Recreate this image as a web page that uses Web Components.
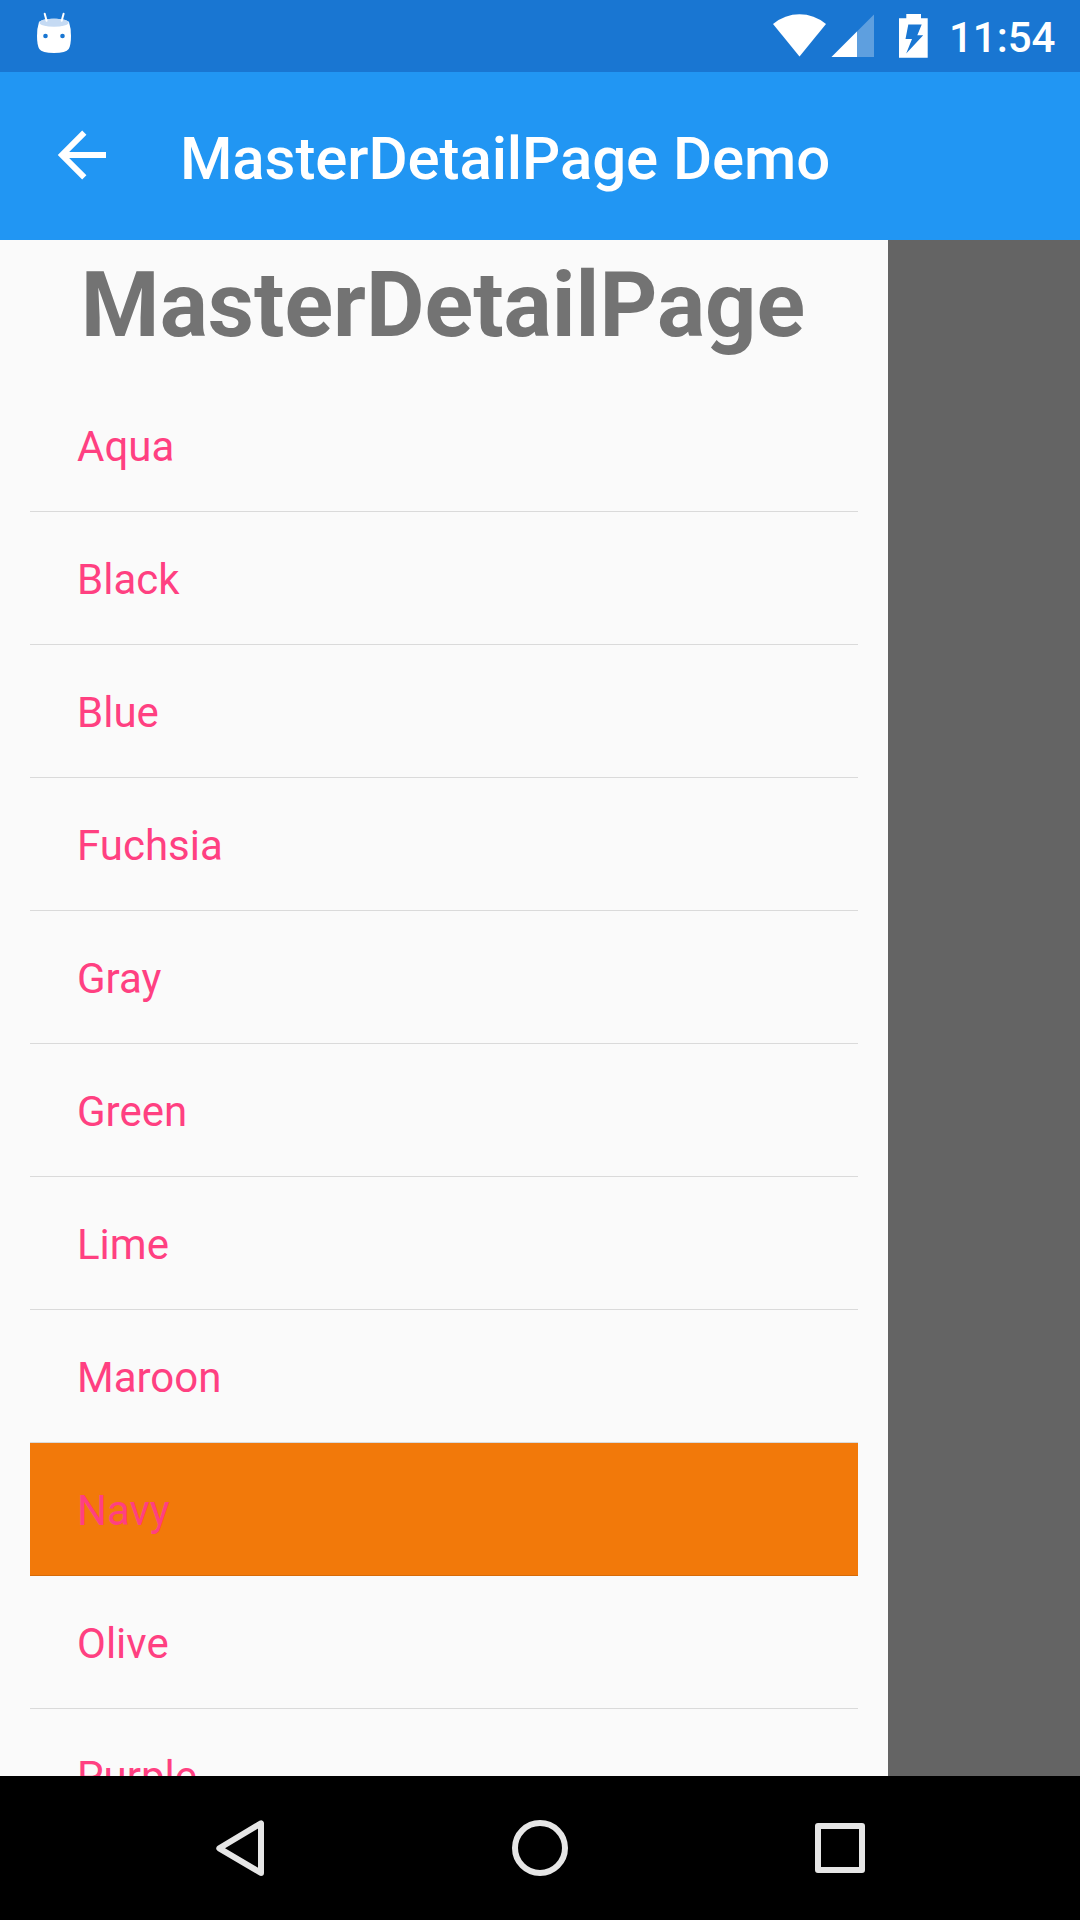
<!DOCTYPE html>
<html lang="en">
<head>
<meta charset="utf-8">
<title>MasterDetailPage Demo</title>
<style>
html,body{margin:0;padding:0}
body{width:1080px;height:1920px;overflow:hidden;font-family:Roboto,sans-serif}
</style>
</head>
<body>
<phone-screen>
  <status-bar slot="status">11:54</status-bar>
  <tool-bar slot="toolbar">MasterDetailPage Demo</tool-bar>
  <master-drawer>
    <span slot="heading">MasterDetailPage</span>
    <color-item>Aqua</color-item>
    <color-item>Black</color-item>
    <color-item>Blue</color-item>
    <color-item>Fuchsia</color-item>
    <color-item>Gray</color-item>
    <color-item>Green</color-item>
    <color-item>Lime</color-item>
    <color-item>Maroon</color-item>
    <color-item selected>Navy</color-item>
    <color-item>Olive</color-item>
    <color-item>Purple</color-item>
  </master-drawer>
  <nav-bar slot="nav"></nav-bar>
</phone-screen>
<script>
function define(name, html) {
  customElements.define(name, class extends HTMLElement {
    constructor() {
      super();
      this.attachShadow({ mode: 'open' }).innerHTML = html;
    }
  });
}

define('phone-screen', `
<style>
:host{display:flex;flex-direction:column;width:1080px;height:1920px;overflow:hidden}
main{flex:1;min-height:0;display:flex;background:#646464;overflow:hidden}
</style>
<slot name="status"></slot><slot name="toolbar"></slot>
<main><slot></slot></main>
<slot name="nav"></slot>`);

define('status-bar', `
<style>
:host{display:flex;height:72px;box-sizing:border-box;background:#1976d2;color:#fff;padding:0 0 0 30px;justify-content:space-between;font-size:42px;font-weight:500}
.right{display:flex;width:315px}
svg{display:block;flex:none}
.time{line-height:72px;padding-top:2px;height:70px;white-space:nowrap;letter-spacing:-.05px}
</style>
<svg width="50" height="72" viewBox="30 0 50 72">
  <path d="M39 22C43 17.5 65 17.5 69 22Q71 28 71 36Q71 45 68.700 49Q66 52.900 54 52.900Q42 52.900 39.300 49Q37 45 37 36Q37 28 39 22Z" fill="#fff"/>
  <ellipse cx="54" cy="22.700" rx="14.600" ry="4" fill="#c5daf3"/>
  <path d="M44.700 13.700L46.600 20.800M63.600 13.700L61.700 20.800" stroke="#fff" stroke-width="2" stroke-linecap="round"/>
  <circle cx="45.500" cy="36" r="2.300" fill="#1976d2"/><circle cx="62.500" cy="36" r="2.300" fill="#1976d2"/>
</svg>
<div class="right">
  <svg width="184" height="72" viewBox="765 0 184 72">
    <path d="M799.500 56.500L773 24Q785 14.300 799.500 14.300T826 24Z" fill="#fff"/>
    <path d="M874 14.500V57H831.500Z" fill="#fff" fill-opacity=".3"/>
    <path d="M857 31.500V57H831.500Z" fill="#fff"/>
    <path fill-rule="evenodd" fill="#fff" d="M906.300 14H921V18.300H927.700V57.700H899V18.300H906.300ZM908.300 24.500L905.500 39H912L906.200 53.500L923.200 35.300H917.300L921.700 24.500Z"/>
  </svg>
  <div class="time"><slot></slot></div>
</div>`);

define('tool-bar', `
<style>
:host{display:flex;height:168px;background:#2196f3;color:#fff;font-size:60px;font-weight:500}
svg{flex:none;display:block}
.title{line-height:168px;padding-top:3px;height:165px;white-space:nowrap;letter-spacing:-.1px}
</style>
<svg width="180" height="168" viewBox="0 72 180 168"><path d="M106 155H64M84.300 132.700L62 155L84.300 177.300" fill="none" stroke="#fff" stroke-width="6"/></svg>
<div class="title"><slot></slot></div>`);

define('master-drawer', `
<style>
:host{display:flex;flex-direction:column;width:888px;height:100%;background:#fafafa;overflow:hidden}
h1{margin:0;flex:none;height:139px;line-height:132px;text-align:center;font-size:90px;font-weight:700;color:#737373;white-space:nowrap;padding-right:2px}
.list{display:flex;flex-direction:column;padding:0 30px}
</style>
<h1><slot name="heading"></slot></h1>
<div class="list"><slot></slot></div>`);

define('color-item', `
<style>
:host{display:block;box-sizing:border-box;flex:none;height:133px;padding:2px 0 0 47px;border-bottom:1px solid #dadada;font-size:42px;line-height:132px;color:#ff4081;white-space:nowrap}
:host([selected]){background:#f2790a;border-bottom-color:#d56b0a}
div{height:130px}
</style>
<div><slot></slot></div>`);

define('nav-bar', `
<style>
:host{display:flex;height:144px;flex:none;box-sizing:border-box;padding:0 90px;background:#000}
div{flex:1;display:flex;align-items:center;justify-content:center}
svg{display:block;fill:none;stroke:#e6e6e6;stroke-width:6}
</style>
<div><svg width="72" height="72" viewBox="204 1812 72 72"><path d="M219.300 1848.300L261 1823.300V1873Z" stroke-linejoin="round"/></svg></div>
<div><svg width="72" height="72"><circle cx="36" cy="36" r="25"/></svg></div>
<div><svg width="72" height="72"><path d="M14 14H58V58H14Z" stroke-linejoin="round"/></svg></div>`);
</script>
</body>
</html>
